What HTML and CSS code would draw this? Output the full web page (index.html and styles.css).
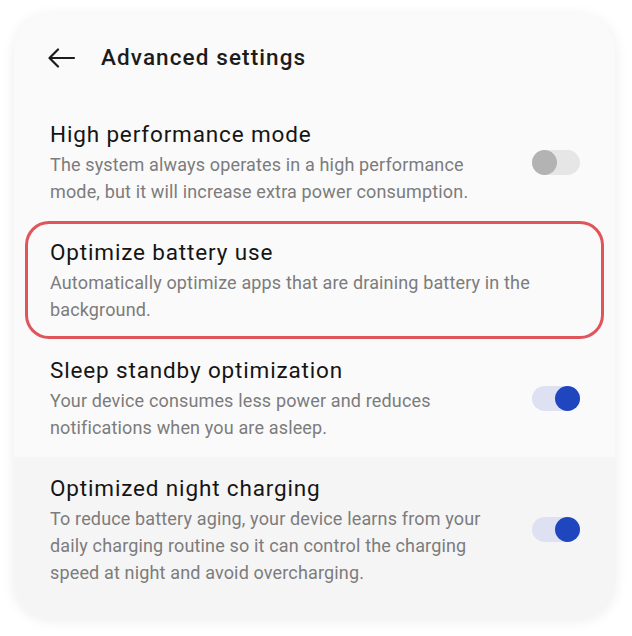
FILE: index.html
```html
<!DOCTYPE html>
<html lang="en">
<head>
  <meta charset="UTF-8">
  <meta name="viewport" content="width=device-width, initial-scale=1.0">
  <title>Advanced settings</title>
  <link rel="stylesheet" href="styles.css">
</head>
<body>
  <div class="card">
    <div class="header">
      <button class="back-btn" aria-label="Back">
        <svg width="28" height="20" viewBox="0 0 28 20">
          <path d="M26 10H2M10 1.5L1.5 10l8.5 8.5" fill="none" stroke="#1c1c1c" stroke-width="2.2" stroke-linecap="round" stroke-linejoin="round"/>
        </svg>
      </button>
      <h1 class="title">Advanced settings</h1>
    </div>

    <div class="list">
      <div class="item">
        <div class="text">
          <div class="item-title">High performance mode</div>
          <div class="item-desc">The system always operates in a high performance mode, but it will increase extra power consumption.</div>
        </div>
        <div class="switch"></div>
      </div>

      <div class="item highlight">
        <div class="text">
          <div class="item-title">Optimize battery use</div>
          <div class="item-desc">Automatically optimize apps that are draining battery in the background.</div>
        </div>
      </div>

      <div class="item">
        <div class="text">
          <div class="item-title">Sleep standby optimization</div>
          <div class="item-desc">Your device consumes less power and reduces notifications when you are asleep.</div>
        </div>
        <div class="switch on"></div>
      </div>
    </div>

    <div class="list group">
      <div class="item">
        <div class="text">
          <div class="item-title">Optimized night charging</div>
          <div class="item-desc">To reduce battery aging, your device learns from your daily charging routine so it can control the charging speed at night and avoid overcharging.</div>
        </div>
        <div class="switch on"></div>
      </div>
    </div>
  </div>
</body>
</html>
```

FILE: styles.css
```css
body {
  margin: 0;
  padding: 14px;
  background-color: #ffffff;
  font-family: Roboto, "Noto Sans", sans-serif;
}

.card {
  width: 601px;
  height: 604px;
  background-color: #fafafa;
  border-radius: 36px;
  box-shadow: 0 2px 14px rgba(0, 0, 0, 0.08);
  overflow: hidden;
  display: flex;
  flex-direction: column;
}

.header {
  height: 89px;
  display: flex;
  align-items: center;
  padding-left: 32px;
  padding-bottom: 4px;
  box-sizing: border-box;
}

.back-btn {
  background: none;
  border: none;
  padding: 0;
  width: 32px;
  height: 32px;
  display: flex;
  align-items: center;
  justify-content: center;
  margin-right: 23px;
  margin-top: 2px;
}

.title {
  margin: 0;
  font-size: 22.5px;
  font-weight: 500;
  color: #1c1c1c;
  letter-spacing: 1.1px;
}

.list {
  padding: 0 11px;
}

.group {
  flex: 1;
  background-color: #f5f5f5;
}

.item {
  display: flex;
  align-items: center;
  padding: 16px 24px 16px 25px;
  border-radius: 24px;
}

.item.highlight {
  box-shadow: inset 0 0 0 3px #e0555b;
}

.text {
  flex: 1;
}

.item-title {
  font-size: 22.5px;
  line-height: 30px;
  letter-spacing: 0.85px;
  color: #151515;
  margin-bottom: 2px;
}

.item-desc {
  font-size: 18px;
  line-height: 27px;
  letter-spacing: 0.15px;
  color: #7c7c7c;
}

.switch {
  position: relative;
  flex: none;
  width: 48px;
  height: 25px;
  margin-left: 24px;
  border-radius: 13px;
  background-color: #e6e6e6;
}

.switch::after {
  content: "";
  position: absolute;
  top: 0;
  left: 0;
  width: 25px;
  height: 25px;
  border-radius: 50%;
  background-color: #b3b3b3;
}

.switch.on {
  background-color: #dde1f2;
}

.switch.on::after {
  left: auto;
  right: 0;
  background-color: #2046bf;
}
```
